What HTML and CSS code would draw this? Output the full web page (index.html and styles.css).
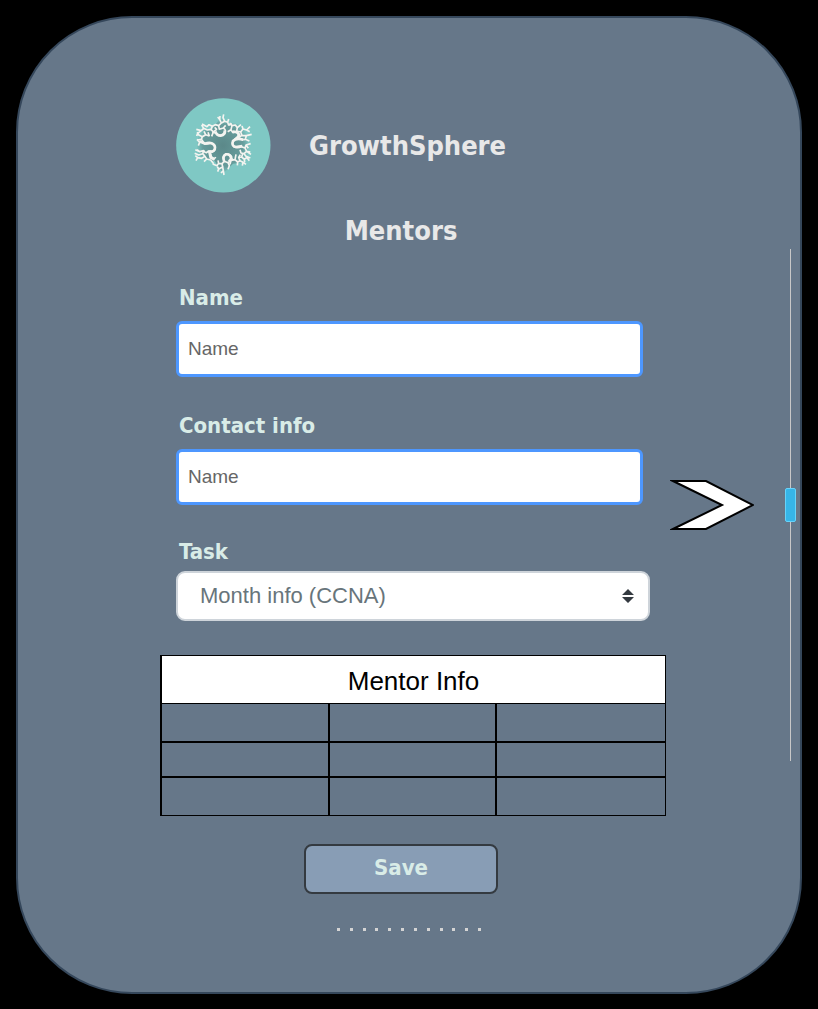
FILE: index.html
```html
<!DOCTYPE html>
<html lang="en">
<head>
<meta charset="utf-8">
<meta name="viewport" content="width=device-width, initial-scale=1">
<title>GrowthSphere – Mentors</title>
<link rel="stylesheet" href="styles.css">
</head>
<body>
<div class="card">
  <main class="content">
    <header class="brand">
      <svg class="logo" viewBox="19 23 285 285" role="img" aria-label="GrowthSphere logo">
        <defs>
          <radialGradient id="core"><stop offset="0" stop-color="#5b8889"/><stop offset=".75" stop-color="#669c9b"/><stop offset="1" stop-color="#7fc8c4"/></radialGradient>
        </defs>
        <circle cx="161" cy="165" r="141.500" fill="#7fc8c4"/>
        <path fill="url(#core)" d="M153 82 177 98 235 105 240 155 240 215 190 220 160 250 135 212 82 200 80 120 128 115Z"/>
        <g class="branches">
          <path d="M128 125 139 129Q154 140 165 130Q172 120 161 113L149 117 147 106 155 98 150 87 144 80M155 98 165 93 160 82 162 72M150 87 151 77M165 93 174 96 177 86M174 96 177 105 187 100M161 113 168 105"/>
          <path d="M147 106 137 103 128 108 124 117 131 125 126 138M128 108 118 103 112 109 97 101M124 117 113 119 102 114 95 121 80 117M102 114 96 104M131 125 141 117 135 111M95 121 84 129 81 137"/>
          <path d="M108 188Q120 179 128 185Q139 179 135 165Q129 156 116 160Q105 162 101 155L90 156 82 147M90 156 86 166M101 155 95 147 98 139 86 133 83 125M98 139 108 133 103 123M95 147 83 149M108 133 119 137 115 126"/>
          <path d="M122 186 125 199Q134 209 138 200M108 188 102 181 90 184 77 178M102 181 99 190 87 194 75 189M99 190 106 198 96 204 84 202 79 211M106 198 111 206 103 214M111 206 123 209 132 220M90 184 82 178M84 202 77 196"/>
          <path d="M190 205 184 210Q191 197 177 192Q163 190 161 202L164 213 157 220 159 230 147 236 143 229M159 230 161 241 163 254M161 241 154 248M164 213 175 217 179 226 175 237M175 217 184 210 181 222M147 236 144 244M157 220 147 219 142 226 129 221M147 219 145 210"/>
          <path d="M184 210 196 208 199 192M196 208 204 215 211 211 207 201 212 193M204 215 203 225M211 211 220 216 229 222M220 216 218 226M207 201 216 200 224 207 231 202M216 200 219 190M224 207 225 216"/>
          <path d="M221 149Q204 139 193 149Q184 161 193 170Q205 174 215 169L226 173 229 164 243 160M226 173 231 183 242 185M231 183 223 190 229 198 242 203M223 190 214 188 211 178M229 198 239 211M231 183 244 192M229 164 236 174"/>
          <path d="M193 149 204 139Q209 129 198 124L190 127 184 118 174 124M184 118 187 106 180 98M187 106 197 104 203 112 214 103M203 112 201 122 213 125 220 116 217 107M220 116 231 119 241 109M231 119 240 124M213 125 217 135 230 136 246 132M230 136 227 147 239 152M217 135 209 140M227 147 221 149"/>
        </g>
        <g class="curls">
          <path d="M137 123Q141 136 153 136Q167 133 165 120"/>
          <path d="M90 153 105 160Q131 152 136 170Q137 185 119 184L123 202 135 208"/>
          <path d="M164 215Q157 198 168 192Q184 190 184 206L178 213"/>
          <path d="M221 148Q199 142 190 152Q184 167 199 170L218 167M194 149 209 138Q210 125 190 124"/>
        </g>
      </svg>
      <h1 class="brand-name">GrowthSphere</h1>
    </header>
    <form class="form">
      <h2 class="title">Mentors</h2>
      <div class="field">
        <label for="name">Name</label>
        <input class="text-box" id="name" type="text" placeholder="Name">
      </div>
      <div class="field">
        <label for="contact">Contact info</label>
        <input class="text-box" id="contact" type="text" placeholder="Name">
      </div>
      <div class="field field-task">
        <label for="task">Task</label>
        <div class="select-wrap">
          <select class="select-box" id="task"><option>Month info (CCNA)</option></select>
          <svg class="select-arrows" viewBox="0 0 12 14" aria-hidden="true"><path d="M0 6 6 0 12 6ZM0 8 6 14 12 8Z" fill="#343a40"/></svg>
        </div>
      </div>
      <table class="info">
        <thead><tr><th colspan="3">Mentor Info</th></tr></thead>
        <tbody>
          <tr><td></td><td></td><td></td></tr>
          <tr><td></td><td></td><td></td></tr>
          <tr><td></td><td></td><td></td></tr>
        </tbody>
      </table>
      <button class="save" type="submit">Save</button>
      <div class="dots" aria-hidden="true"><i></i><i></i><i></i><i></i><i></i><i></i><i></i><i></i><i></i><i></i><i></i><i></i></div>
    </form>
  </main>
  <button class="next" type="button" aria-label="Next">
    <svg viewBox="0 0 84 50"><path d="M3 1H36L83 25 36 49H3L52 25Z" fill="#fff" stroke="#000" stroke-width="2" stroke-miterlimit="6"/></svg>
  </button>
  <input class="scroll" type="range" min="0" max="100" value="50" aria-label="Scroll position">
</div>
</body>
</html>
```
FILE: styles.css
```css
* {
  box-sizing: border-box;
}

body {
  margin: 0;
  padding: 16px 16px 15px;
  background: #000;
  font-family: "Liberation Sans", Arial, sans-serif;
}

.card {
  display: grid;
  grid-template-columns: minmax(0, 1fr) 115px 11px;
  align-items: center;
  padding: 0 4px 0 142px;
  background: #667789;
  border: 2px solid #35475b;
  border-radius: 116px;
}

.content {
  margin-right: 4px;
  padding: 80px 0 61px;
}

.brand {
  display: flex;
  align-items: center;
  gap: 38px;
  padding-left: 16px;
}

.logo {
  width: 95px;
  height: 95px;
}

.branches {
  fill: none;
  stroke: #f4f4f0;
  stroke-width: 5;
  stroke-linejoin: bevel;
}

.curls {
  fill: none;
  stroke: #f4f4f0;
  stroke-width: 8;
}

.brand-name,
.title {
  margin: 0;
  color: #e8e8e8;
  font: bold 27px/36px "DejaVu Sans Condensed", "Noto Sans", sans-serif;
}

.form {
  display: flex;
  flex-direction: column;
}

.title {
  margin: 20px 24px 32px 0;
  text-align: center;
}

.field {
  display: flex;
  flex-direction: column;
  gap: 6px;
  margin: 0 23px 32px 16px;
}

.field label {
  padding-left: 3px;
  color: #d9ece7;
  font: bold 22px/34px "DejaVu Sans Condensed", "Noto Sans", sans-serif;
}

.text-box {
  width: 100%;
  height: 56px;
  padding: 0 9px;
  background: #fff;
  border: 3px solid #4d97ff;
  border-radius: 6px;
  color: #666;
  font: 19px "Liberation Sans", Arial, sans-serif;
}

.text-box::placeholder {
  color: #666;
}

.field-task {
  gap: 2px;
  margin: -2px 16px 34px;
}

.select-wrap {
  position: relative;
}

.select-box {
  display: block;
  width: 100%;
  height: 50px;
  padding: 0 40px 2px 22px;
  appearance: none;
  background: #fff;
  border: 2px solid #ced4da;
  border-radius: 9px;
  color: #68757b;
  font: 22px "Liberation Sans", Arial, sans-serif;
}

.select-arrows {
  position: absolute;
  top: 18px;
  right: 16px;
  width: 12px;
  height: 14px;
  pointer-events: none;
}

.info {
  width: 100%;
  table-layout: fixed;
  border-collapse: separate;
  border-spacing: 0;
  border: solid #000;
  border-width: 1px 1px 1px 2px;
}

.info th {
  height: 48px;
  padding: 3px 0 0;
  background: #fff;
  border-bottom: 1px solid #000;
  color: #000;
  font-size: 26px;
  font-weight: normal;
}

.info td {
  height: 39px;
  padding: 0;
  border-right: 2px solid #000;
  border-bottom: 2px solid #000;
}

.info tr:nth-child(2) td {
  height: 35px;
}

.info tr:nth-child(3) td {
  height: 37px;
  border-bottom: 0;
}

.info td:last-child {
  border-right: 0;
}

.save {
  align-self: center;
  width: 194px;
  height: 50px;
  margin: 28px 24px 34px 0;
  padding: 0 0 2px;
  background: #889db5;
  border: 2px solid #343a40;
  border-radius: 8px;
  color: #d9ece7;
  font: bold 22px/32px "DejaVu Sans Condensed", "Noto Sans", sans-serif;
}

.dots {
  display: flex;
  align-self: center;
  justify-content: space-between;
  width: 144px;
  margin-right: 8px;
}

.dots i {
  width: 3px;
  height: 3px;
  background: #d4d4d4;
}

.next {
  display: block;
  padding: 0;
  background: none;
  border: 0;
}

.next svg {
  display: block;
  width: 84px;
  height: 50px;
}

.scroll {
  width: 11px;
  height: 512px;
  margin: 0;
  appearance: none;
  background: linear-gradient(#c8c8c8, #c8c8c8) center / 1px 100% no-repeat;
  writing-mode: vertical-lr;
}

.scroll::-webkit-slider-thumb {
  width: 11px;
  height: 34px;
  appearance: none;
  background: #36b5e8;
  border: 1px solid #67d3fa;
  border-radius: 2px;
}
```
